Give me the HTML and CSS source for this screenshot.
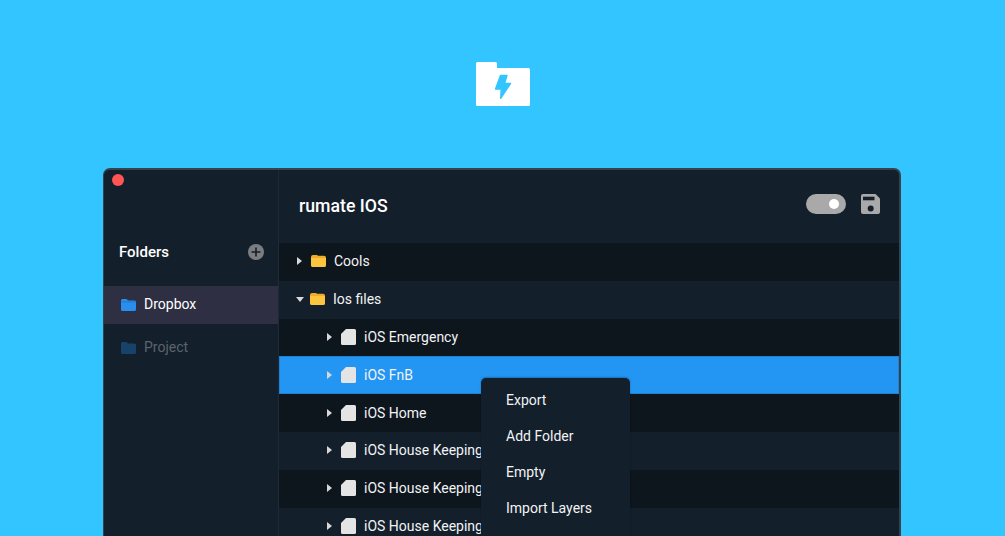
FILE: index.html
```html
<!DOCTYPE html>
<html lang="en">
<head>
<meta charset="utf-8">
<title>rumate IOS</title>
<link rel="stylesheet" href="styles.css">
</head>
<body>
<div class="page">
  <header class="logo">
    <svg width="54" height="44" viewBox="0 0 54 44"><path fill="#fff" d="M1.500 0h18a1.500 1.500 0 0 1 1.500 1.500V6h31.500A1.500 1.500 0 0 1 54 7.500v35a1.500 1.500 0 0 1-1.500 1.500h-51A1.500 1.500 0 0 1 0 42.500v-41A1.500 1.500 0 0 1 1.500 0z"/><path fill="#33c5ff" stroke="#33c5ff" stroke-width="1.400" stroke-linejoin="round" d="M24.500 13.500H31L28.500 21.500H34.500L24.700 36.300L25.200 27H19.500Z"/></svg>
  </header>
  <main class="window">
    <aside class="sidebar">
      <span class="close-dot"></span>
      <div class="folders-head">
        <h2>Folders</h2>
        <svg class="plus" width="16" height="16" viewBox="0 0 16 16"><circle cx="8" cy="8" r="8" fill="#7b7d80"/><path stroke="#141f2b" stroke-width="1.600" d="M8 3.500v9M3.500 8h9"/></svg>
      </div>
      <div class="side-item active">
        <svg width="15" height="12" viewBox="0 0 15 12"><path fill="#2a8fec" d="M1.500 0h4l1.500 1.500h6.500a1.500 1.500 0 0 1 1.500 1.500v7.500a1.500 1.500 0 0 1-1.500 1.500h-12A1.500 1.500 0 0 1 0 10.500v-9A1.500 1.500 0 0 1 1.500 0z"/><path fill="#1f7fdb" d="M0 2h15v1.500H0z"/></svg>
        <span>Dropbox</span>
      </div>
      <div class="side-item muted">
        <svg width="15" height="12" viewBox="0 0 15 12"><path fill="#17426a" d="M1.500 0h4l1.500 1.500h6.500a1.500 1.500 0 0 1 1.500 1.500v7.500a1.500 1.500 0 0 1-1.500 1.500h-12A1.500 1.500 0 0 1 0 10.500v-9A1.500 1.500 0 0 1 1.500 0z"/></svg>
        <span>Project</span>
      </div>
    </aside>
    <section class="content">
      <div class="toolbar">
        <h1>rumate IOS</h1>
        <div class="tools">
          <div class="toggle"><span></span></div>
          <svg width="19" height="20" viewBox="0 0 19 20"><path fill="#a9a9a9" d="M2 0h12.500L19 4.500V18a2 2 0 0 1-2 2H2a2 2 0 0 1-2-2V2a2 2 0 0 1 2-2z"/><rect x="2" y="2.700" width="11.500" height="3.600" fill="#141f2b"/><circle cx="9.700" cy="14.500" r="3" fill="#141f2b"/></svg>
        </div>
      </div>
      <div class="tree">
        <div class="row dark"><span class="arrow right"></span><svg class="folder" width="15" height="12" viewBox="0 0 15 12"><path fill="#f0ab27" d="M2 0h4l1 .8h6a2 2 0 0 1 2 2V10a2 2 0 0 1-2 2H2a2 2 0 0 1-2-2V2a2 2 0 0 1 2-2z"/><path fill="#fcc441" d="M0 3h15v7a2 2 0 0 1-2 2H2a2 2 0 0 1-2-2z"/></svg><span>Cools</span></div>
        <div class="row light"><span class="arrow down"></span><svg class="folder" width="15" height="12" viewBox="0 0 15 12"><path fill="#f0ab27" d="M2 0h4l1 .8h6a2 2 0 0 1 2 2V10a2 2 0 0 1-2 2H2a2 2 0 0 1-2-2V2a2 2 0 0 1 2-2z"/><path fill="#fcc441" d="M0 3h15v7a2 2 0 0 1-2 2H2a2 2 0 0 1-2-2z"/></svg><span>Ios files</span></div>
        <div class="row dark child"><span class="arrow right"></span><svg class="file" width="15" height="16" viewBox="0 0 15 16"><path fill="#e4e4e4" d="M5 0h8.500A1.500 1.500 0 0 1 15 1.500v13a1.500 1.500 0 0 1-1.500 1.500h-12A1.500 1.500 0 0 1 0 14.500V5z"/></svg><span>iOS Emergency</span></div>
        <div class="row selected child"><span class="arrow right"></span><svg class="file" width="15" height="16" viewBox="0 0 15 16"><path fill="#e4e4e4" d="M5 0h8.500A1.500 1.500 0 0 1 15 1.500v13a1.500 1.500 0 0 1-1.500 1.500h-12A1.500 1.500 0 0 1 0 14.500V5z"/></svg><span>iOS FnB</span></div>
        <div class="row dark child"><span class="arrow right"></span><svg class="file" width="15" height="16" viewBox="0 0 15 16"><path fill="#e4e4e4" d="M5 0h8.500A1.500 1.500 0 0 1 15 1.500v13a1.500 1.500 0 0 1-1.500 1.500h-12A1.500 1.500 0 0 1 0 14.500V5z"/></svg><span>iOS Home</span></div>
        <div class="row light child"><span class="arrow right"></span><svg class="file" width="15" height="16" viewBox="0 0 15 16"><path fill="#e4e4e4" d="M5 0h8.500A1.500 1.500 0 0 1 15 1.500v13a1.500 1.500 0 0 1-1.500 1.500h-12A1.500 1.500 0 0 1 0 14.500V5z"/></svg><span>iOS House Keeping</span></div>
        <div class="row dark child"><span class="arrow right"></span><svg class="file" width="15" height="16" viewBox="0 0 15 16"><path fill="#e4e4e4" d="M5 0h8.500A1.500 1.500 0 0 1 15 1.500v13a1.500 1.500 0 0 1-1.500 1.500h-12A1.500 1.500 0 0 1 0 14.500V5z"/></svg><span>iOS House Keeping</span></div>
        <div class="row light child"><span class="arrow right"></span><svg class="file" width="15" height="16" viewBox="0 0 15 16"><path fill="#e4e4e4" d="M5 0h8.500A1.500 1.500 0 0 1 15 1.500v13a1.500 1.500 0 0 1-1.500 1.500h-12A1.500 1.500 0 0 1 0 14.500V5z"/></svg><span>iOS House Keeping</span></div>
      </div>
      <ul class="menu">
        <li>Export</li>
        <li>Add Folder</li>
        <li>Empty</li>
        <li>Import Layers</li>
      </ul>
    </section>
  </main>
</div>
</body>
</html>
```
FILE: styles.css
```css
* { box-sizing: border-box; }
html, body { margin: 0; height: 536px; overflow: hidden; }
body { background: #33c5ff; font-family: Roboto, "Liberation Sans", sans-serif; color: #f2f3f4; }
.page { display: flex; flex-direction: column; align-items: center; height: 536px; overflow: hidden; }
.logo { height: 168px; flex: none; padding: 62px 0 0 1px; display: flex; justify-content: center; width: 100%; }
.logo svg { display: block; }
.window { width: 798px; height: 368px; margin-left: -1px; flex: none; display: flex; background: #131f2b; border: 1px solid #34434d; border-top-width: 2px; border-right-width: 2px; border-bottom: 0; border-radius: 7px 7px 0 0; }
.sidebar { width: 175px; flex: none; border-right: 1px solid #1e2b37; position: relative; padding-top: 62px; }
.close-dot { position: absolute; left: 8px; top: 4px; width: 12px; height: 12px; border-radius: 50%; background: #ff5554; }
.folders-head { height: 40px; padding: 0 14px 0 15px; display: flex; align-items: center; justify-content: space-between; margin-bottom: 14px; }
.folders-head h2 { margin: 0; font-size: 15px; font-weight: 500; color: #fff; }
.side-item { height: 38px; padding: 0 0 1px 17px; display: flex; align-items: center; gap: 8px; font-size: 14px; margin-bottom: 5px; }
.side-item span { position: relative; top: -1px; }
.side-item.active { background: #2e2f42; color: #fff; }
.side-item.muted { color: #5b646d; }
.content { flex: 1; min-width: 0; position: relative; display: flex; flex-direction: column; }
.toolbar { height: 73px; flex: none; padding: 0 19px 0 20px; display: flex; align-items: center; justify-content: space-between; }
.toolbar h1 { margin: 0 0 1px; font-size: 17.700px; font-weight: 500; color: #fff; }
.tools { display: flex; align-items: center; gap: 15px; margin-top: -5px; }
.toggle { width: 40px; height: 20px; border-radius: 10px; background: #a9a9a9; display: flex; align-items: center; justify-content: flex-end; padding-right: 7px; }
.toggle span { width: 10px; height: 10px; border-radius: 50%; background: #fff; }
.tree { flex: 1; }
.row { height: 37.800px; display: flex; align-items: center; padding: 0 0 1px 18px; font-size: 14px; }
.row.child { padding-left: 48px; }
.row.dark { background: #0d151d; }
.row.light { background: #131f2b; }
.row.selected { background: #2395f3; box-shadow: inset 0 0 0 1px #1f7fd0; }
.arrow { width: 0; height: 0; flex: none; }
.arrow.right { border-left: 5px solid #d8d8d8; border-top: 4px solid transparent; border-bottom: 4px solid transparent; margin-right: 9px; }
.arrow.down { border-top: 5px solid #d8d8d8; border-left: 4.500px solid transparent; border-right: 4.500px solid transparent; margin-left: -1px; margin-right: 6px; }
.folder, .file { margin-right: 8px; flex: none; }
.menu { position: absolute; left: 202px; top: 208px; width: 149px; height: 200px; margin: 0; padding: 4px 0 0 25px; list-style: none; background: #131f2b; border-radius: 5px 5px 0 0; box-shadow: 0 -1px 2px rgba(0,0,0,.25); font-size: 14px; }
.menu li { height: 36px; display: flex; align-items: center; }
```
